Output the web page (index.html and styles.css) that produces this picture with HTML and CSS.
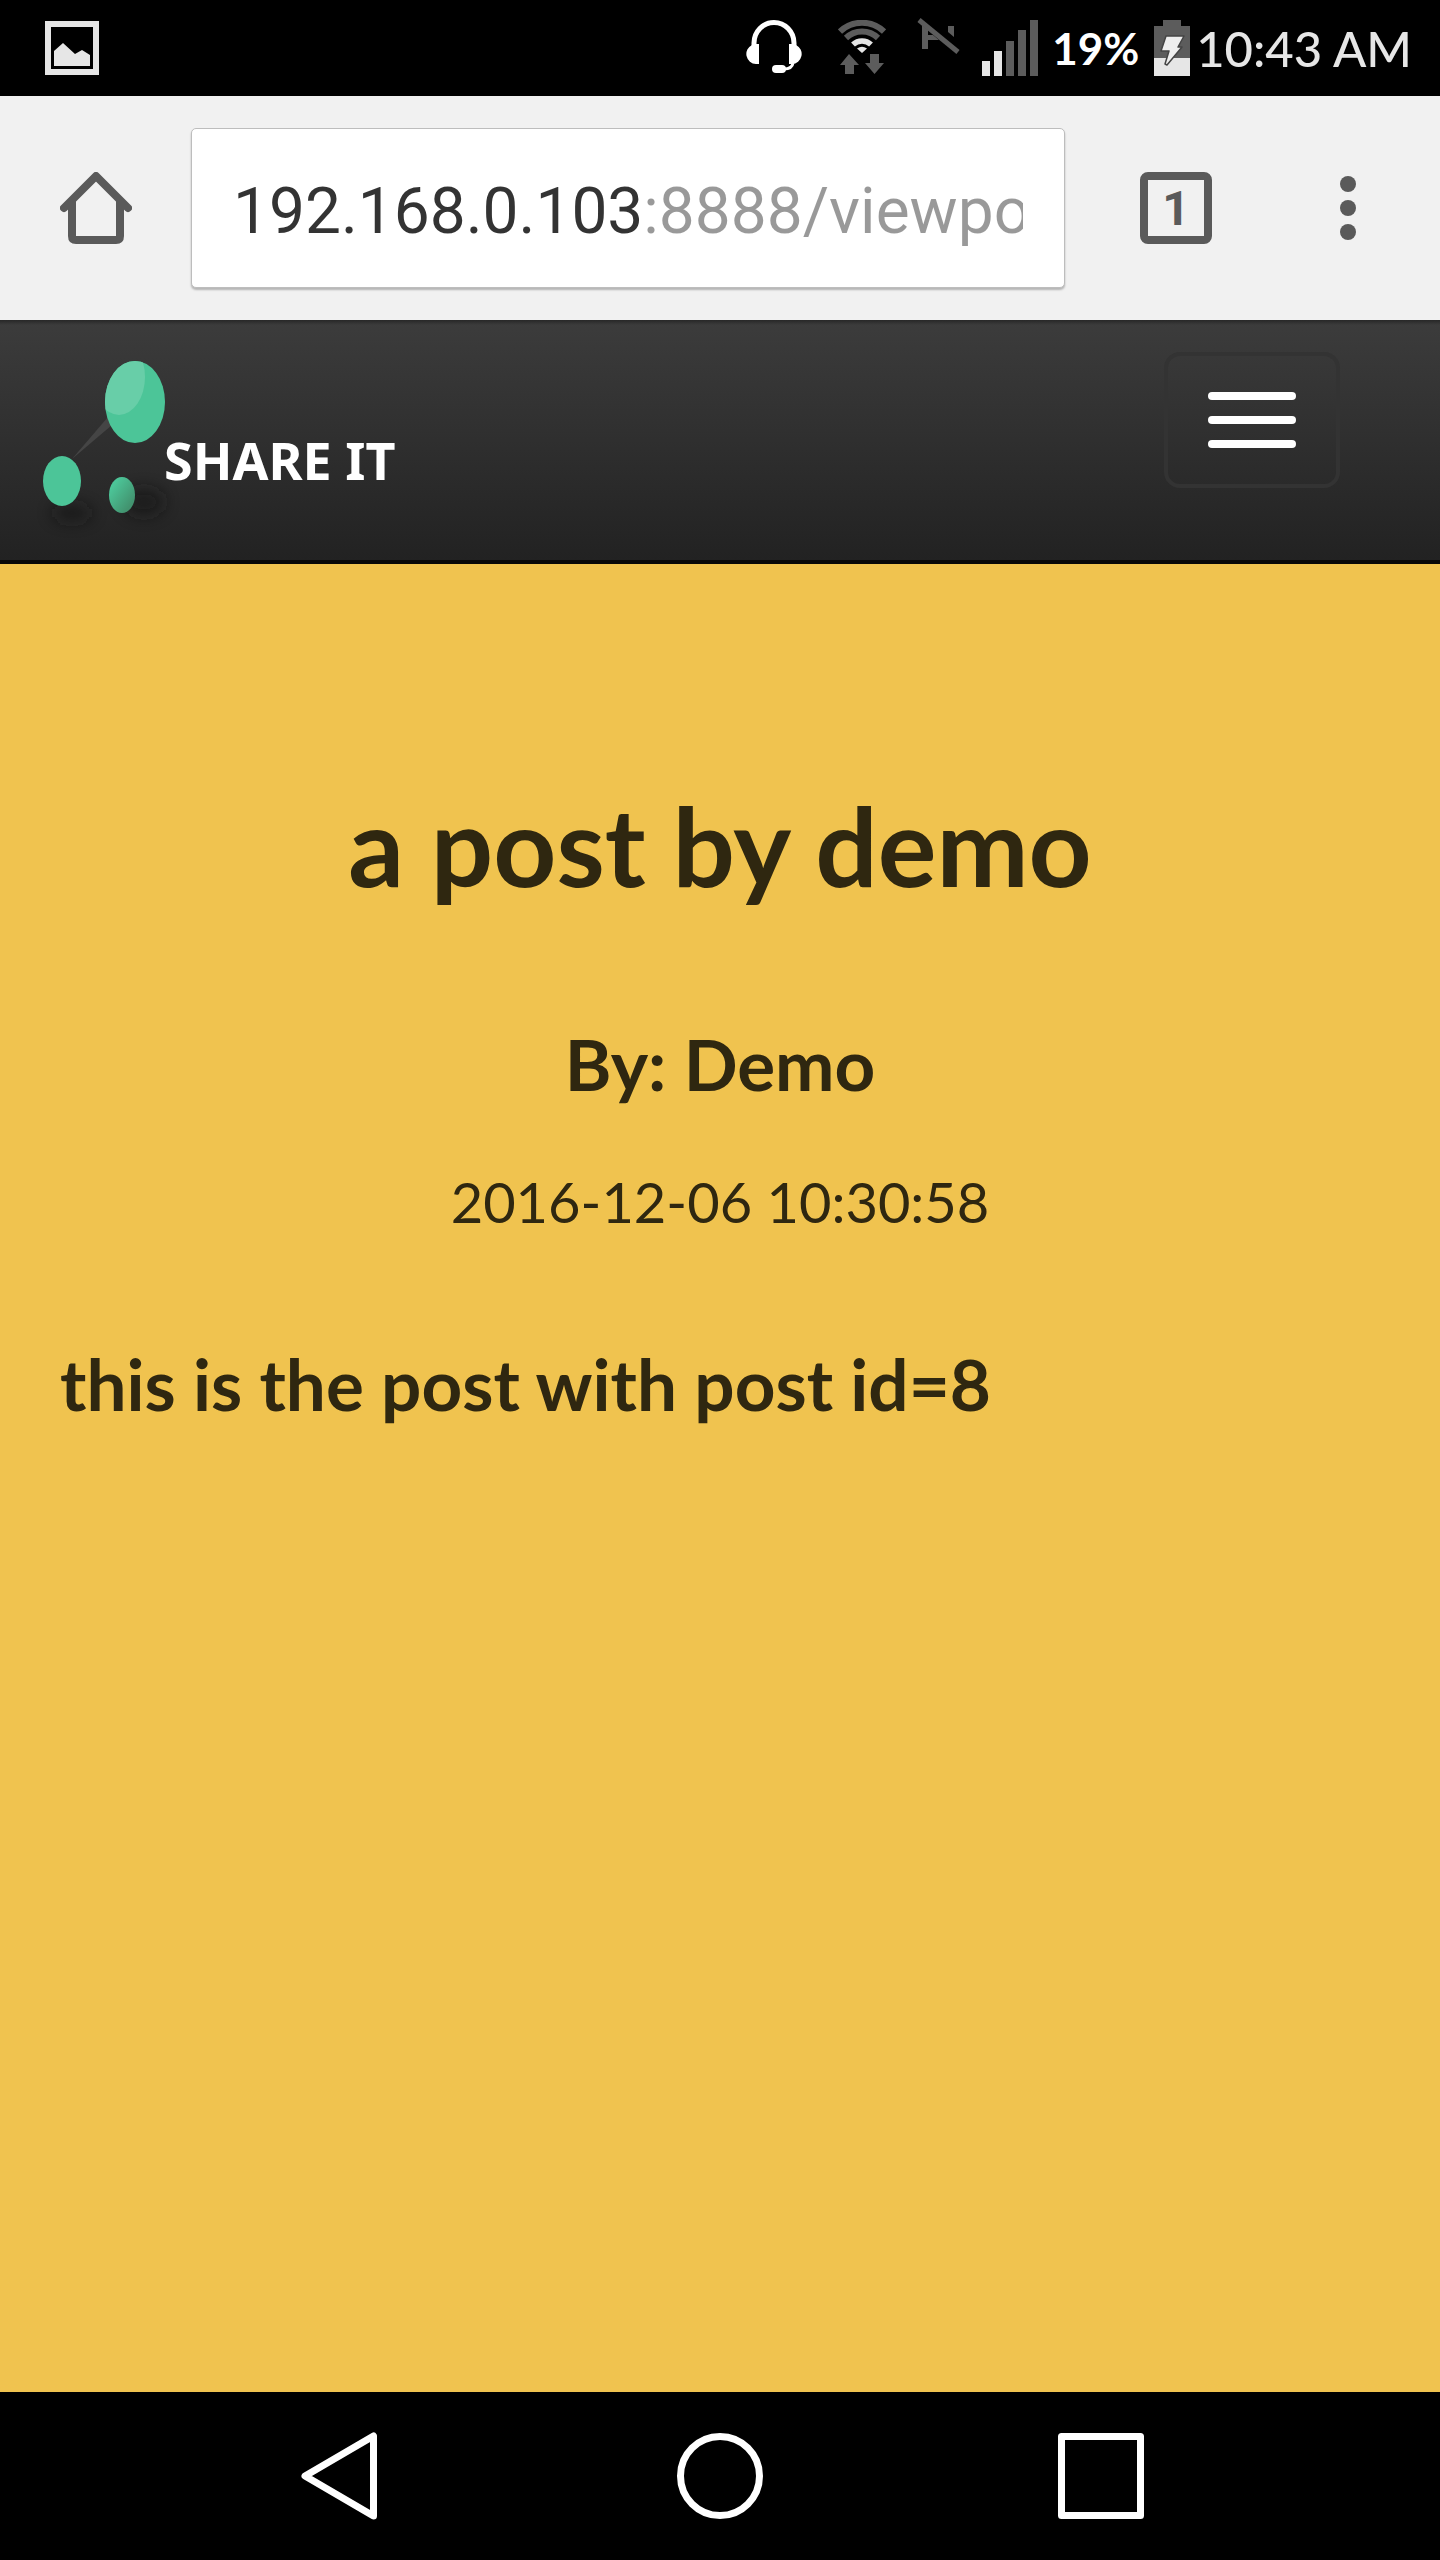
FILE: index.html
```html
<!DOCTYPE html>
<html lang="en">
<head>
<meta charset="utf-8">
<meta name="viewport" content="width=device-width, initial-scale=1">
<title>a post by demo</title>
<link rel="stylesheet" href="styles.css">
</head>
<body>
<header class="status">
  <svg class="status-note" width="54" height="54" viewBox="0 0 54 54" aria-hidden="true">
    <path fill="#e6e6e6" fill-rule="evenodd" d="M0 0H54V54H0ZM6 6V48H48V6Z"/>
    <path fill="#e6e6e6" d="M9 30 18 22 30 33 37 29 45 34V45H9Z"/>
  </svg>
  <div class="status-icons">
    <svg width="56" height="56" viewBox="0 0 56 56" aria-hidden="true">
      <path fill="none" stroke="#fff" stroke-width="5" d="M8 26V23A20 20.500 0 0 1 48 23V26"/>
      <path fill="#fff" d="M13 24V44H10A10 10 0 0 1 6 25V24ZM43 24V44H46A10 10 0 0 0 50 25V24Z"/>
      <path fill="none" stroke="#fff" stroke-width="3" d="M47 43Q46 49 38 49"/>
      <rect x="26" y="45" width="14" height="8" rx="4" fill="#fff"/>
    </svg>
    <svg class="wifi" width="48" height="56" viewBox="0 0 48 56" aria-hidden="true">
      <g fill="none" stroke="#5c5c5c" stroke-width="6">
        <path d="M2 11.500A32 32 0 0 1 46 11.500"/>
        <path d="M8 18A23 23 0 0 1 40 18"/>
      </g>
      <path fill="none" stroke="#e6e6e6" stroke-width="5.500" d="M15 24.500A13 13 0 0 1 33 24.500"/>
      <path fill="#e6e6e6" d="M19 28.500Q24 25 29 28.500L24 33Z"/>
      <path fill="#5c5c5c" d="M11 34 21 45H16V54H7V45H2ZM32 34H41V43H46L36.500 54 27 43H32Z"/>
    </svg>
    <svg class="nfc" width="46" height="38" viewBox="0 0 46 38" aria-hidden="true">
      <path fill="#5c5c5c" d="M6 8 12 13V18H17L23 23H12V32H6ZM32 9H38V20L32 15Z"/>
      <path stroke="#5c5c5c" stroke-width="5" d="M3 3 42 35"/>
    </svg>
    <svg class="signal" width="56" height="56" viewBox="0 0 56 56" aria-hidden="true">
      <path fill="#e6e6e6" d="M0 41H8V56H0ZM12 31H20V56H12Z"/>
      <path fill="#5c5c5c" d="M24 21H32V56H24ZM36 10H44V56H36ZM48 0H56V56H48Z"/>
    </svg>
    <span class="percent">19%</span>
    <svg class="battery" width="36" height="56" viewBox="0 0 36 56" aria-hidden="true">
      <path fill="#5c5c5c" d="M9 0H27V6H36V38H0V6H9Z"/>
      <path fill="#e6e6e6" d="M0 38H36V56H0Z"/>
      <path fill="#eee" stroke="#444" stroke-width="1.500" stroke-linejoin="round" d="M12 16H30L24 27H28L13 45 11 44 15 31H7Z"/>
    </svg>
    <time class="clock">10:43 AM</time>
  </div>
</header>

<div class="toolbar">
  <button class="icon-button home" type="button" aria-label="Home">
    <svg width="72" height="72" viewBox="0 0 72 72" fill="none" stroke="#5a5a5a" stroke-width="8">
      <path stroke-linecap="round" stroke-linejoin="round" d="M4 36 36 4 68 36"/>
      <path d="M12 28V64Q12 68 16 68H56Q60 68 60 64V28"/>
    </svg>
  </button>
  <div class="address"><input class="url" type="text" aria-label="Address" value="192.168.0.103:8888/viewpo"></div>
  <button class="icon-button tabs" type="button" aria-label="Open tabs">1</button>
  <button class="icon-button more" type="button" aria-label="More options">
    <svg width="16" height="72" viewBox="0 0 16 72" fill="#5a5a5a"><circle cx="8" cy="12" r="8"/><circle cx="8" cy="36" r="8"/><circle cx="8" cy="60" r="8"/></svg>
  </button>
</div>

<nav class="navbar">
  <a class="brand" href="#">
    <svg class="logo" width="124" height="180" viewBox="0 12 124 180" aria-hidden="true">
      <defs>
        <filter id="soft" x="-100%" y="-200%" width="300%" height="500%"><feGaussianBlur stdDeviation="8"/></filter>
        <linearGradient id="small" x1="0" y1="0" x2="1" y2="1"><stop offset=".2" stop-color="#4cc598"/><stop offset=".8" stop-color="#42936f"/></linearGradient>
        <clipPath id="big"><ellipse cx="95" cy="62" rx="30" ry="41"/></clipPath>
      </defs>
      <g fill="#181818" opacity=".7" filter="url(#soft)"><ellipse cx="32" cy="173" rx="20" ry="8"/><ellipse cx="104" cy="162" rx="20" ry="13"/></g>
      <path fill="#454545" d="M32 119 68 77 72 85Z"/>
      <ellipse cx="95" cy="62" rx="30" ry="41" fill="#4cc598"/>
      <ellipse cx="79" cy="37" rx="26" ry="38" fill="#68cea8" clip-path="url(#big)"/>
      <ellipse cx="22" cy="141" rx="19" ry="25" fill="#4cc598"/>
      <ellipse cx="82" cy="155" rx="13" ry="18" fill="url(#small)"/>
    </svg>
    <span class="brand-name">SHARE IT</span>
  </a>
  <button class="toggle" type="button" aria-label="Toggle navigation">
    <span class="bar"></span><span class="bar"></span><span class="bar"></span>
  </button>
</nav>

<main class="post">
  <h1 class="title">a post by demo</h1>
  <h2 class="author">By: Demo</h2>
  <p class="date"><time datetime="2016-12-06T10:30:58">2016-12-06 10:30:58</time></p>
  <p class="body-text">this is the post with post id=8</p>
</main>

<footer class="system">
  <button class="icon-button" type="button" aria-label="Back">
    <svg width="88" height="88" viewBox="0 0 88 88" fill="none" stroke="#fff" stroke-width="7" stroke-linejoin="round"><path d="M78.500 4V84L10 44Z"/></svg>
  </button>
  <button class="icon-button" type="button" aria-label="Home screen">
    <svg width="88" height="88" viewBox="0 0 88 88" fill="none" stroke="#fff" stroke-width="7"><circle cx="44" cy="44" r="39.500"/></svg>
  </button>
  <button class="icon-button" type="button" aria-label="Recent apps">
    <svg width="88" height="88" viewBox="0 0 88 88" fill="none" stroke="#fff" stroke-width="7" stroke-linejoin="round"><path d="M4.500 4.500H83.500V83.500H4.500Z"/></svg>
  </button>
</footer>
</body>
</html>
```
FILE: styles.css
```css
* {
  box-sizing: border-box;
}

body {
  margin: 0;
  min-height: 100vh;
  display: flex;
  flex-direction: column;
  background: #f0c34f;
  color: #2f2710;
  font-family: Lato, "Liberation Sans", sans-serif;
}

svg {
  display: block;
  flex: none;
}

.status {
  height: 96px;
  padding: 0 28px 0 45px;
  display: flex;
  align-items: center;
  justify-content: space-between;
  background: #000;
  color: #e6e6e6;
}

.status-icons {
  height: 56px;
  display: flex;
  align-items: center;
  white-space: nowrap;
}

.wifi {
  margin-left: 36px;
}

.nfc {
  margin: 0 20px 24px 30px;
}

.percent {
  width: 90px;
  margin-left: 14px;
  color: #fff;
  font-size: 44px;
  font-weight: 700;
}

.battery {
  margin-left: 12px;
}

.clock {
  margin-left: 6px;
  font-size: 49px;
  font-weight: 500;
}

.icon-button {
  padding: 0;
  border: 0;
  background: none;
  cursor: pointer;
  display: flex;
  align-items: center;
  justify-content: center;
}

.toolbar {
  height: 224px;
  padding: 0 84px 0 60px;
  display: flex;
  align-items: center;
  background: #f1f1f1;
}

.address {
  flex: 1;
  min-width: 0;
  height: 160px;
  margin: 0 75px 0 59px;
  padding: 6px 41px 0;
  border: 1px solid #bdbdbd;
  border-radius: 5px;
  background: #fff;
  box-shadow: 0 2px 2px rgba(0, 0, 0, .25);
}

.url {
  display: block;
  width: 100%;
  height: 100%;
  padding: 0;
  border: 0;
  outline: 0;
  background: linear-gradient(to right, #333 411px, #999 411px);
  -webkit-background-clip: text;
  background-clip: text;
  -webkit-text-fill-color: transparent;
  font: 400 64px Roboto, sans-serif;
}

.tabs {
  width: 72px;
  height: 72px;
  margin-right: 128px;
  border: 8px solid #5a5a5a;
  border-radius: 8px;
  color: #5a5a5a;
  font: 700 48px Roboto, sans-serif;
}

.navbar {
  height: 244px;
  padding: 32px 100px 0 40px;
  display: flex;
  align-items: flex-start;
  justify-content: space-between;
  border-bottom: 4px solid #080808;
  background: linear-gradient(rgba(0, 0, 0, .35), transparent 5px), linear-gradient(#3c3c3c, #222);
}

.brand {
  display: flex;
  align-items: center;
  color: #fff;
  text-decoration: none;
}

.logo {
  overflow: visible;
}

.brand-name {
  padding-top: 36px;
  font-family: "Noto Sans", sans-serif;
  font-size: 52px;
  font-weight: 700;
  line-height: 60px;
}

.toggle {
  width: 176px;
  padding: 36px 40px;
  display: grid;
  gap: 16px;
  border: 4px solid #333;
  border-radius: 16px;
  background: none;
  cursor: pointer;
}

.bar {
  height: 8px;
  border-radius: 4px;
  background: #fff;
}

.post {
  flex: 1;
  padding: 212px 60px 80px;
  text-align: center;
}

.title,
.author {
  margin: 0;
  font-weight: 700;
}

.title {
  font-size: 110px;
  line-height: 136px;
}

.author {
  margin-top: 108px;
  font-size: 71px;
  line-height: 88px;
}

.date {
  margin: 54px 0 0;
  font-size: 56px;
  line-height: 80px;
}

.body-text {
  margin: 98px 0 0;
  font-size: 71px;
  font-weight: 700;
  line-height: 88px;
  text-align: left;
}

.system {
  height: 168px;
  padding: 0 148px;
  display: grid;
  grid-template-columns: repeat(3, 1fr);
  background: #000;
}
```
